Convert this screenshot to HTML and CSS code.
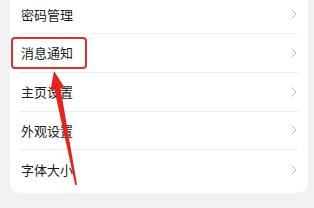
FILE: index.html
```html
<!DOCTYPE html>
<html lang="zh">
<head>
<meta charset="utf-8">
<link rel="stylesheet" href="styles.css">
</head>
<body>
<div class="page">
  <div class="card">
    <div class="row"><span class="label">密码管理</span><svg class="chev" viewBox="0 0 6 10"><path d="M0.5 0.5 L5 5 L0.5 9.5"/></svg></div>
    <div class="row"><span class="label">消息通知</span><svg class="chev" viewBox="0 0 6 10"><path d="M0.5 0.5 L5 5 L0.5 9.5"/></svg><div class="highlight"></div></div>
    <div class="row"><span class="label">主页设置</span><svg class="chev" viewBox="0 0 6 10"><path d="M0.5 0.5 L5 5 L0.5 9.5"/></svg></div>
    <div class="row"><span class="label">外观设置</span><svg class="chev" viewBox="0 0 6 10"><path d="M0.5 0.5 L5 5 L0.5 9.5"/></svg></div>
    <div class="row last"><span class="label">字体大小</span><svg class="chev" viewBox="0 0 6 10"><path d="M0.5 0.5 L5 5 L0.5 9.5"/></svg></div>
  </div>
  <svg class="arrow" viewBox="0 0 314 208" width="314" height="208"><polygon points="54,76 64.5,92.5 60.5,93.3 77,189.8 75.3,190.2 54.3,94.5 50.5,95.2"/></svg>
</div>
</body>
</html>
```
FILE: styles.css
```css
html, body {
  margin: 0;
  padding: 0;
}
body {
  background: #f2f2f4;
  width: 314px;
  height: 208px;
  overflow: hidden;
  font-family: "Noto Sans CJK SC", "Noto Sans", sans-serif;
}
.page {
  position: relative;
  width: 314px;
  height: 208px;
}
.card {
  margin: -4.75px 0 0 10px;
  width: 298px;
  background: #ffffff;
  border-radius: 0 0 10px 10px;
  padding-bottom: 3.5px;
  box-sizing: border-box;
}
.row {
  position: relative;
  margin: 0 10px;
  height: 38.75px;
  box-sizing: border-box;
  border-bottom: 1px solid #ececec;
  display: flex;
  align-items: center;
  justify-content: space-between;
  padding: 0 1px 0 1px;
}
.row.last {
  border-bottom: none;
}
.label {
  font-size: 13px;
  color: #1b1b1b;
  letter-spacing: 0;
}
.chev {
  width: 6px;
  height: 10px;
  fill: none;
  stroke: #bcbcbc;
  stroke-width: 1;
}
.highlight {
  position: absolute;
  left: -9px;
  top: 3px;
  width: 76px;
  height: 32px;
  box-sizing: border-box;
  border: 2.5px solid #d8302a;
  border-radius: 4px;
}
.arrow {
  position: absolute;
  left: 0;
  top: 0;
  fill: #e3231c;
}
```
